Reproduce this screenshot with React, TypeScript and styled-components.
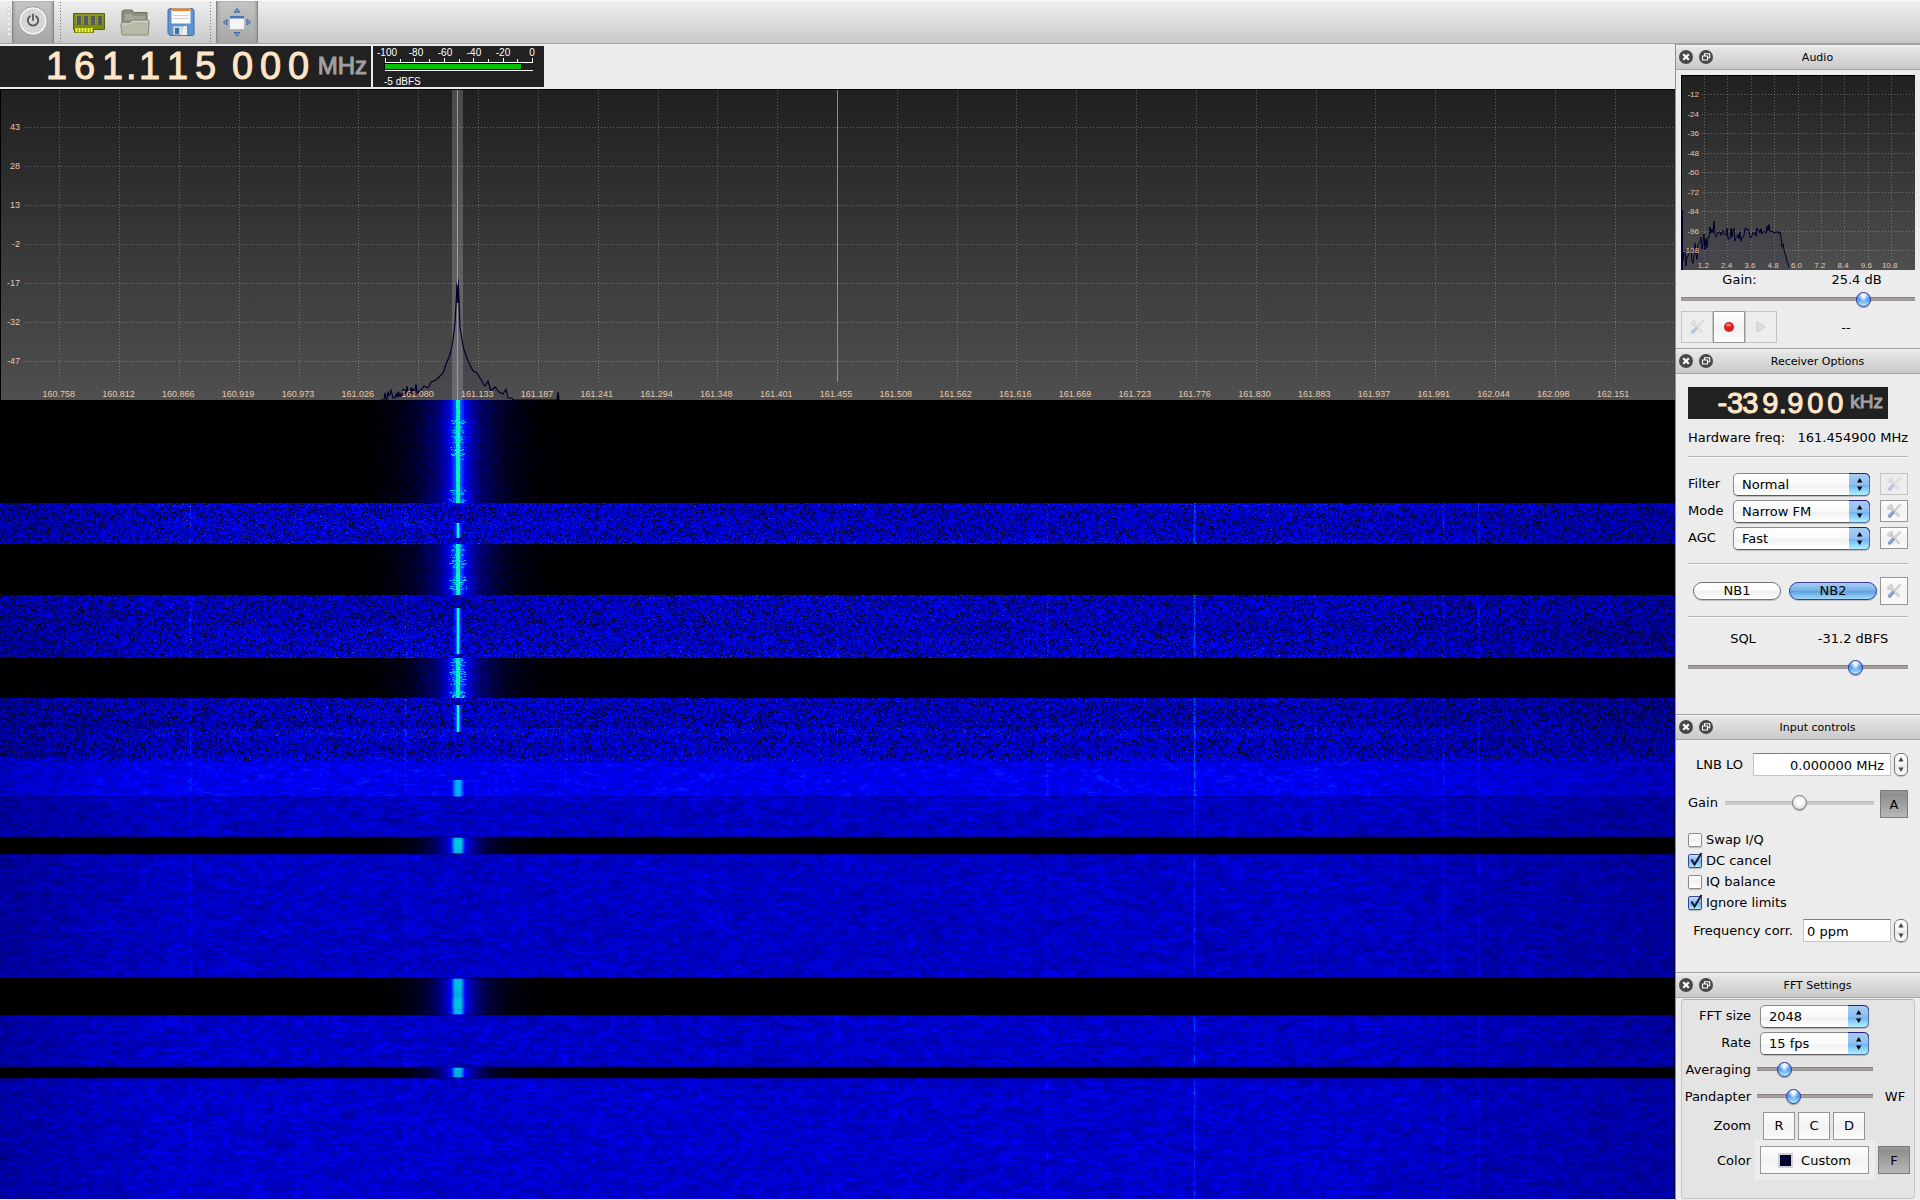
import React, { useId, useLayoutEffect, useRef, useState } from "react";
import styled, { createGlobalStyle, css } from "styled-components";

const UI_FONT = `"Lucida Grande", "DejaVu Sans", sans-serif`;
const PLOT_FONT = `Helvetica, "Liberation Sans", Arial, sans-serif`;

const GlobalStyle = createGlobalStyle`
  *, *::before, *::after { box-sizing: border-box; }
  body { margin: 0; background: #ececec; overflow: hidden; }
  button, input, select { font: inherit; color: inherit; margin: 0; }
`;

/* ---------- shell ---------- */

const Window = styled.div`
  display: flex;
  flex-direction: column;
  height: 100vh;
  font: 13px/19px ${UI_FONT};
  color: #000;
  background: #ececec;
`;

const Toolbar = styled.header`
  display: flex;
  align-items: stretch;
  height: 44px;
  flex: none;
  padding-left: 6px;
  border-top: 1px solid #fafafa;
  border-bottom: 1px solid #a4a4a4;
  background: linear-gradient(#efefef, #c9c9c9);
`;

const Grip = styled.span`
  width: 6px;
  margin: 5px 0;
  background: radial-gradient(circle at 3px 3px, #f8f8f8 1px, #b9b9b9 2px, transparent 2px) 0 0 / 6px 5px;
`;

const ToolButton = styled.button<{ $on?: boolean }>`
  display: grid;
  place-items: center;
  width: ${(p) => (p.$on ? 42 : 46)}px;
  padding: 0;
  border: 0;
  background: ${(p) => (p.$on ? "linear-gradient(#c4c4c4, #a6a6a6)" : "none")};
  box-shadow: ${(p) => (p.$on ? "inset 1px 0 #868686, inset -1px 0 #868686, inset 3px 0 3px -1px #999, inset -3px 0 3px -1px #999" : "none")};
`;

const ToolSeparator = styled.span`
  width: 12px;
  margin: 1px 0;
  background: linear-gradient(#777 1px, transparent 1px) center top / 1px 3px repeat-y;
`;

const Workspace = styled.div`
  display: flex;
  flex: 1;
  min-height: 0;
`;

const Receiver = styled.main`
  display: flex;
  flex-direction: column;
  flex: 1;
  min-width: 0;
`;

const Readouts = styled.div`
  display: flex;
  gap: 2px;
  height: 45px;
  padding: 2px 0;
`;

/* ---------- frequency display ---------- */

const FreqBox = styled.output<{ $large?: boolean }>`
  display: flex;
  align-items: baseline;
  justify-content: flex-end;
  width: ${(p) => (p.$large ? 371 : 200)}px;
  height: ${(p) => (p.$large ? 41 : 32)}px;
  padding-right: ${(p) => (p.$large ? 4 : 5)}px;
  background: #212121;
  color: #ffe6c8;
  font: ${(p) => (p.$large ? "38px/41px" : "29px/32px")} ${PLOT_FONT};
  -webkit-text-stroke: 1px;
`;

const Digit = styled.span<{ $large?: boolean; $sep?: boolean }>`
  display: flex;
  justify-content: center;
  white-space: pre;
  width: ${(p) => (p.$large ? (p.$sep ? 9 : 28) : p.$sep ? 5 : 20)}px;
`;

const Unit = styled.span<{ $large?: boolean }>`
  margin-left: 5px;
  padding-bottom: 2px;
  color: #a0a0a4;
  font-size: ${(p) => (p.$large ? 24 : 19)}px;
  align-self: center;
`;

function Frequency({ cells, unit, large }: { cells: string[]; unit: string; large?: boolean }) {
  return (
    <FreqBox $large={large}>
      {cells.map((c, i) => (
        <Digit key={i} $large={large} $sep={c === "." || c === " "}>
          {c}
        </Digit>
      ))}
      <Unit $large={large}>{unit}</Unit>
    </FreqBox>
  );
}

/* ---------- signal meter ---------- */

const MeterSvg = styled.svg`
  width: 171px;
  height: 41px;
  background: #212121;
  font: 10px ${PLOT_FONT};
  fill: #fff;
`;

function Meter() {
  const ticks = Array.from({ length: 11 }, (_, i) => 12 + Math.round(i * 14.7));
  return (
    <MeterSvg role="img" aria-label="Signal level">
      {["-100", "-80", "-60", "-40", "-20", "0"].map((t, i) => (
        <text key={t} x={14 + i * 29} y={10} textAnchor="middle">
          {t}
        </text>
      ))}
      {ticks.map((x, i) => (
        <rect key={x} x={x} y={i % 2 ? 13 : 12} width={1} height={i % 2 ? 3 : 4} />
      ))}
      <rect x={12} y={16} width={148} height={1} />
      <rect x={11} y={17} width={138} height={7} fill="#000" />
      <rect x={12} y={18} width={136} height={5} fill="#00c000" />
      <rect x={12} y={24} width={148} height={1} />
      <text x={11} y={39}>
        -5 dBFS
      </text>
    </MeterSvg>
  );
}

/* ---------- spectrum ---------- */

const Spectrum = styled.section`
  display: grid;
  grid-template-rows: 1fr auto;
  flex: none;
  height: 311px;
  border: solid #000;
  border-width: 1px 0 0 1px;
  background: linear-gradient(#202020, #4f4f4f);
  font: 9px/11px ${PLOT_FONT};
  color: #e6c8aa;
`;

const PlotSvg = styled.svg`
  grid-area: 1 / 1 / 3 / 2;
  width: 100%;
  height: 100%;
  min-height: 0;
`;

const LevelScale = styled.ol<{ $pitch: number; $top: number; $width: number }>`
  grid-area: 1 / 1 / 3 / 2;
  list-style: none;
  margin: 0;
  padding: ${(p) => p.$top}px 0 0;
  width: ${(p) => p.$width}px;
  text-align: right;
  li { height: ${(p) => p.$pitch}px; }
`;

const FreqScale = styled.ol<{ $inset: string }>`
  grid-area: 2 / 1;
  display: flex;
  list-style: none;
  margin: 0 2px 0 -2px;
  padding: 0 ${(p) => p.$inset};
  li { flex: 1 1 0; display: flex; justify-content: center; min-width: 0; }
`;

const LABELS = (
  "160.758 160.812 160.866 160.919 160.973 161.026 161.080 161.133 161.187 161.241 161.294 161.348 161.401 " +
  "161.455 161.508 161.562 161.616 161.669 161.723 161.776 161.830 161.883 161.937 161.991 162.044 162.098 162.151"
).split(" ");

function rand(x: number, y: number) {
  let h = (Math.imul(x, 374761393) + Math.imul(y, 668265263)) | 0;
  h = Math.imul(h ^ (h >>> 13), 1274126177);
  h = Math.imul(h ^ (h >>> 15), 2246822519);
  return ((h ^ (h >>> 16)) >>> 0) / 4294967296;
}

const LEFT_SKIRT = [
  [421, 390], [424, 386], [428, 388], [431, 382], [436, 380], [440, 376], [443, 373], [446, 364],
  [449, 357], [451, 351], [453, 340], [455, 323], [456, 305], [457, 284], [458, 279],
];
const RIGHT_SKIRT = [
  [459, 300], [460, 327], [462, 340], [464, 350], [467, 358], [470, 365], [473, 371], [477, 373],
  [480, 378], [483, 383], [485, 386], [488, 381], [491, 391], [495, 387], [499, 392], [503, 394],
  [506, 389], [508, 398], [512, 398],
];

function tracePath() {
  const pts: number[][] = [];
  for (let x = 380; x < 421; x += 1) {
    const lift = (x - 380) / 41;
    const spike = rand(x, 3) > 0.5 ? rand(x, 9) * 10 : 0;
    pts.push([x, Math.min(400, 401 - lift * 9 - spike)]);
  }
  pts.push(...LEFT_SKIRT, ...RIGHT_SKIRT);
  for (let x = 513; x < 560; x += 1) {
    const spike = rand(x, 5) > 0.86 ? rand(x, 7) * 7 : 0;
    pts.push([x, 400 - spike]);
  }
  pts.push([557, 400], [558, 392], [559, 400]);
  return "M" + pts.map(([x, y]) => `${x - 1} ${(y - 90).toFixed(1)}`).join("L");
}

const TRACE = tracePath();

function SpectrumPlot() {
  return (
    <Spectrum aria-label="Spectrum">
      <PlotSvg viewBox="0 0 1674 310" preserveAspectRatio="none">
        <g stroke="#fff" strokeOpacity=".28" strokeDasharray="1 2" shapeRendering="crispEdges">
          {LABELS.map((l, i) => {
            const x = Math.floor(((i + 1) * 1675) / 28) - 0.5;
            return <path key={l} d={`M${x} 0V292`} />;
          })}
          {Array.from({ length: 7 }, (_, i) => (
            <path key={i} d={`M24 ${37.5 + i * 39}H1672`} />
          ))}
        </g>
        <rect x="836" width="1" height="292" fill="#8c8ca0" />
        <path d={TRACE + "V310H379Z"} fill="#303050" fillOpacity=".18" />
        <rect x="451" width="11" height="310" fill="#fff" fillOpacity=".19" />
        <path d={TRACE} fill="none" stroke="#00002c" strokeWidth="1.2" />
        <rect x="456" width="1" height="310" fill="#ff7474" shapeRendering="crispEdges" />
        <rect x="456" y="195" width="2" height="18" fill="#00002c" shapeRendering="crispEdges" />
      </PlotSvg>
      <LevelScale $pitch={39} $top={32} $width={19}>
        {["43", "28", "13", "-2", "-17", "-32", "-47"].map((l) => (
          <li key={l}>{l}</li>
        ))}
      </LevelScale>
      <FreqScale $inset="calc(100% / 56)">
        {LABELS.map((l) => (
          <li key={l}>{l}</li>
        ))}
      </FreqScale>
    </Spectrum>
  );
}

/* ---------- waterfall ---------- */

const WaterfallBox = styled.section`
  display: flex;
  flex: 1;
  min-height: 0;
  margin-bottom: 1px;
  background: #000;
  canvas { flex: 1; min-width: 0; height: 100%; width: 100%; }
`;

type Band = { end: number; kind: "carrier" | "speckle" | "streak" | "soft" | "softCarrier"; level?: number; tone?: [number, number] };

const BANDS: Band[] = [
  { end: 103, kind: "carrier" },
  { end: 144, kind: "speckle", level: 0.84, tone: [123, 138] },
  { end: 195, kind: "carrier" },
  { end: 258, kind: "speckle", level: 0.82, tone: [208, 254] },
  { end: 298, kind: "carrier" },
  { end: 332, kind: "speckle", level: 0.79, tone: [305, 332] },
  { end: 361, kind: "streak", level: 0.86 },
  { end: 397, kind: "soft", level: 0.93, tone: [380, 397] },
  { end: 437, kind: "soft", level: 0.76 },
  { end: 454, kind: "softCarrier" },
  { end: 578, kind: "soft", level: 0.76 },
  { end: 615, kind: "softCarrier" },
  { end: 667, kind: "soft", level: 0.78 },
  { end: 678, kind: "softCarrier" },
  { end: 9999, kind: "soft", level: 0.79 },
];

const SPURS: [number, number][] = [
  [1194, 0.42], [1443, 0.2], [1478, 0.2], [1315, 0.12], [1047, 0.16], [1530, 0.12],
  [190, 0.16], [405, 0.16], [837, 0.12], [1100, 0.08], [1395, 0.08], [565, 0.08],
];

function smooth(x: number, y: number, sx: number, sy: number, seed: number) {
  const fx = x / sx;
  const fy = y / sy;
  const ix = Math.floor(fx);
  const iy = Math.floor(fy);
  const tx = fx - ix;
  const ty = fy - iy;
  const a = rand(ix + seed, iy);
  const b = rand(ix + 1 + seed, iy);
  const c = rand(ix + seed, iy + 1);
  const d = rand(ix + 1 + seed, iy + 1);
  return (a + (b - a) * tx) * (1 - ty) + (c + (d - c) * tx) * ty;
}

function paintWaterfall(canvas: HTMLCanvasElement) {
  const w = canvas.clientWidth;
  const h = canvas.clientHeight;
  if (!w || !h) return;
  canvas.width = w;
  canvas.height = h;
  const ctx = canvas.getContext("2d");
  if (!ctx) return;
  const img = ctx.createImageData(w, h);
  const scale = w / 1675;
  // the carrier falls between two bins, so both neighbours carry its peak
  const carrier = Math.floor(457 * scale) + 0.5;
  const spur = new Float32Array(w);
  SPURS.forEach(([x, amount]) => {
    const c = Math.round(x * scale);
    spur[c] += amount;
    if (c + 1 < w) spur[c + 1] += amount / 2;
    if (c > 0) spur[c - 1] += amount / 3;
  });
  let bi = 0;
  for (let y = 0; y < h; y++) {
    while (y >= BANDS[bi].end) bi++;
    const band = BANDS[bi];
    const start = bi ? BANDS[bi - 1].end : 0;
    const fromEdge = Math.min(y - start, band.end - 1 - y);
    const burst = band.kind === "carrier" && smooth(y, 1, 9, 1, 77) > 0.42 && rand(y, 21) > 0.35;
    const reach = burst ? 3 + rand(y, 31) * 6 : 0;
    const rowGain = (rand(y, 55) - 0.5) * 0.05;
    for (let x = 0; x < w; x++) {
      const d = Math.abs(x - carrier);
      const r = rand(x, y);
      const edge = Math.min(1, 0.8 + (x / w) * 2) * Math.min(1, 0.78 + ((w - x) / w) * 1.1);
      let v = 0;
      if (band.kind === "carrier") {
        v = 1.05 * Math.exp(-Math.max(0, d - 6) / 18) * (0.86 + r * 0.2);
        if (burst && d < 40) v *= 1.1;
        if (d > 26 && d < 130) v += Math.max(0, r * 0.26 * (1 - d / 130) - 0.05);
        else if (d >= 130 && r > 0.994) v += 0.1;
        if (d < 6) v = 1.05 + (6 - d) * 0.07 + r * 0.1;
        if (d < reach && rand(x >> 1, y + 999) > 0.35) v = 1.35 + r * 0.5;
        if (d < 2) v = 1.75 + r * 0.3;
        if (d < 1) v = 2.42;
      } else if (band.kind === "softCarrier") {
        v = 1.05 * Math.exp(-Math.max(0, d - 6) / 17) * (0.93 + smooth(x, y, 5, 3, 2) * 0.1);
        if (d < 8) v = Math.max(v, 1.7 - Math.max(0, d - 3) * 0.18 + (smooth(1, y, 1, 5, 8) - 0.5) * 0.2);
        if (d > 80) v *= 0.4;
        v *= fromEdge < 1 ? 0.7 : 1;
      } else if (band.kind === "soft") {
        const n = smooth(x, y, 4, 2, 11) * 0.6 + smooth(x, y, 9, 4, 301) * 0.4;
        v = (band.level! + (n - 0.5) * 0.42 + rowGain) * edge + spur[x] * (0.5 + n * 0.5);
        if (band.tone && y >= band.tone[0] && y < band.tone[1] && d < 7) v = 1.68 - Math.max(0, d - 2) * 0.16;
        if (fromEdge < 1) v *= 0.8;
        if (w - x < 3) v *= 0.4;
      } else {
        const r2 = band.kind === "streak" ? rand(x, (y / 3) | 0) * 0.65 + r * 0.35 : r;
        const dim = smooth(x, y, 400, 12, 50) * 0.12;
        v = band.level! - dim + (r2 - 0.5) * 0.6 + rowGain;
        if (rand(x + 77, y) < 0.14) v *= 0.25;
        else if (rand((x >> 1) + 33, y) > 0.965) v += 0.16;
        if (fromEdge < 4) v += 0.08;
        v = Math.min(v * edge + spur[x] * 1.2, 1.35);
        if (spur[x] > 0.4) v = Math.max(v, 1.05);
        if (band.tone && y >= band.tone[0] && y < band.tone[1]) {
          if (d < 4) v = 0.95 + r * 0.3;
          if (d < 2) v = 1.4;
          if (d < 1) v = 2.1;
        }
      }
      const o = (y * w + x) * 4;
      v = Math.max(0, v);
      img.data[o] = 0;
      img.data[o + 1] = v <= 1 ? 0 : Math.min(255, (v - 1) * 255);
      img.data[o + 2] = v <= 1 ? v * 255 : v <= 2 ? 255 - (band.kind === "softCarrier" ? (v - 1) * 40 : 0) : Math.max(0, (3 - v) * 255);
      img.data[o + 3] = 255;
    }
  }
  ctx.putImageData(img, 0, 0);
}

function Waterfall() {
  const ref = useRef<HTMLCanvasElement>(null);
  useLayoutEffect(() => {
    const paint = () => ref.current && paintWaterfall(ref.current);
    paint();
    window.addEventListener("resize", paint);
    return () => window.removeEventListener("resize", paint);
  }, []);
  return (
    <WaterfallBox aria-label="Waterfall">
      <canvas ref={ref} />
    </WaterfallBox>
  );
}

/* ---------- dock ---------- */

const Dock = styled.aside`
  display: flex;
  flex-direction: column;
  flex: none;
  width: 245px;
  border-left: 1px solid #8e8e8e;
  background: #ececec;
`;

const Panel = styled.section<{ $height?: number }>`
  display: flex;
  flex-direction: column;
  ${(p) => (p.$height ? `min-height: ${p.$height}px;` : "flex: 1;")}
`;

const PanelHeader = styled.header`
  display: flex;
  align-items: center;
  gap: 6px;
  height: 26px;
  padding: 0 4px 0 3px;
  border-top: 1px solid #a0a0a0;
  border-bottom: 1px solid #a8a8a8;
  background: linear-gradient(#f6f6f6, #e6e6e6 10%, #c9c9c9);
  button { display: block; width: 14px; height: 14px; padding: 0; border: 0; background: none; }
  svg { display: block; }
`;

const PanelTitle = styled.h2`
  flex: 1;
  margin: 0;
  padding-top: 1px;
  text-align: center;
  font-size: 11px;
  line-height: 23px;
  font-weight: 400;
`;

function DockPanel({ title, height, children }: { title: string; height?: number; children: React.ReactNode }) {
  return (
    <Panel $height={height}>
      <PanelHeader>
        <button aria-label={`Close ${title}`}>
          <svg width="14" height="14" viewBox="0 0 14 14">
            <circle cx="7" cy="7" r="7" fill="#474747" />
            <path d="M4.2 4.2l5.6 5.6M9.8 4.2L4.2 9.8" stroke="#fff" strokeWidth="2.2" />
          </svg>
        </button>
        <button aria-label={`Float ${title}`}>
          <svg width="14" height="14" viewBox="0 0 14 14">
            <circle cx="7" cy="7" r="7" fill="#474747" />
            <path d="M5.5 5.5V3.7h5.2v4H9M3.5 6h5v4h-5z" fill="none" stroke="#fff" strokeWidth="1.1" />
          </svg>
        </button>
        <PanelTitle>{title}</PanelTitle>
      </PanelHeader>
      {children}
    </Panel>
  );
}

const AudioBody = styled.div`
  padding: 5px 5px 0;
`;

const AudioPlot = styled.div`
  display: grid;
  grid-template-rows: 1fr auto;
  height: 195px;
  border-top: 1px solid #000;
  border-left: 1px solid #000;
  background: linear-gradient(#202020, #4f4f4f);
  font: 8px/8px ${PLOT_FONT};
  color: #e6c8aa;
`;

const Pair = styled.div`
  display: grid;
  grid-template-columns: 1fr 1fr;
  text-align: center;
`;

const Spread = styled.div`
  display: flex;
  justify-content: space-between;
  white-space: nowrap;
`;

const Slider = styled.input.attrs({ type: "range" })<{ $dim?: boolean; $h?: number; $top?: number }>`
  appearance: none;
  display: block;
  width: 100%;
  min-width: 0;
  height: ${(p) => p.$h ?? 16}px;
  margin-top: ${(p) => p.$top ?? 0}px;
  background: linear-gradient(${(p) => (p.$dim ? "#b4b4b4, #d0d0d0 50%, #c8c8c8" : "#7d7472, #b0aaaa 50%, #8f8a8a")}) center / 100% 4px no-repeat;
  border-radius: 2px;
  &::-webkit-slider-thumb {
    appearance: none;
    width: 15px;
    height: 15px;
    border-radius: 50%;
    border: 1px solid ${(p) => (p.$dim ? "#7c7c7c" : "#2b2f9c")};
    background: ${(p) =>
      p.$dim
        ? "radial-gradient(circle at 50% 45%, #fff 25%, #dcdcdc 75%)"
        : "radial-gradient(ellipse at 50% 12%, #f4faff 15%, transparent 50%), linear-gradient(#8fbdf0, #4f9cec 50%, #b4f2ff)"};
    box-shadow: 0 1px 1px #0005;
  }
`;

const AudioButtons = styled.div`
  display: flex;
  align-items: center;
  margin-top: 4px;
`;

const SquareButton = styled.button<{ $w?: number; $h?: number; $disabled?: boolean; $down?: boolean }>`
  display: flex;
  align-items: center;
  justify-content: center;
  gap: 8px;
  flex: none;
  width: ${(p) => p.$w ?? 28}px;
  height: ${(p) => p.$h ?? 28}px;
  padding: 0;
  border: 1px solid #969696;
  background: linear-gradient(#fefefe, #f2f2f2 50%, #fafafa);
  ${(p) => p.$disabled && css`
    border-color: #c4c4c4;
    background: #ededed;
    svg { opacity: 0.5; }
  `}
  ${(p) => p.$down && css`
    border-color: #7c7c7c;
    background: linear-gradient(#979797 2px, #8e8e8e 3px, #b8b8b8);
  `}
`;

const RecordTime = styled.output`
  flex: 1;
  text-align: center;
`;

const ToolsIcon = () => (
  <svg width="16" height="16" viewBox="0 0 16 16" fill="none" strokeLinecap="round">
    <path d="M3.5 3.5l9 9.2" stroke="#b4b4b4" strokeWidth="2.4" />
    <path d="M3.5 3.5l9 9.2" stroke="#e2e2e2" strokeWidth="1.2" />
    <path d="M1.6 4.2a2.4 2.4 0 1 0 2.8-2.8" stroke="#c8c8c8" strokeWidth="1.5" />
    <path d="M14 2L8 8.3" stroke="#bcbcbc" strokeWidth="2" />
    <path d="M14 2L8 8.3" stroke="#e8e8e8" strokeWidth="1" />
    <path d="M6.6 9.8l-3 3.2" stroke="#6d92c6" strokeWidth="3.4" />
    <path d="M6.2 9.6l-3 3" stroke="#9dbbe0" strokeWidth="1.2" />
  </svg>
);

function audioTrace() {
  const env = [
    [0, 186], [6, 182], [14, 176], [22, 168], [27, 160], [32, 155], [40, 157], [52, 158],
    [56, 162], [62, 157], [78, 156], [84, 152], [88, 150], [94, 156], [98, 161], [101, 172], [104, 186], [107, 194],
  ];
  const out: string[] = [];
  for (let x = 0; x <= 107; x++) {
    const i = Math.max(0, env.findIndex(([ex]) => ex >= x) - 1);
    const [x0, y0] = env[i];
    const [x1, y1] = env[i + 1];
    const base = y0 + ((y1 - y0) * (x - x0)) / (x1 - x0);
    const noise = (rand(x, 41) - 0.5) * (x < 30 ? 20 : 12);
    out.push(`${x} ${(x === 32 ? 145 : base + noise).toFixed(1)}`);
  }
  return "M" + out.join("L");
}
const AUDIO_TRACE = audioTrace();

function AudioPanel() {
  const [gain, setGain] = useState(80);
  const id = useId();
  return (
    <DockPanel title="Audio" height={304}>
      <AudioBody>
        <AudioPlot>
          <PlotSvg viewBox="0 0 233 194" preserveAspectRatio="none">
            <g stroke="#fff" strokeOpacity=".28" strokeDasharray="1 2" shapeRendering="crispEdges">
              {Array.from({ length: 9 }, (_, i) => (
                <React.Fragment key={i}>
                  <path d={`M${Math.floor((i + 1) * 23.4) - 0.5} 0V184`} />
                  <path d={`M20 ${Math.floor((i + 1) * 19.5) - 0.5}H233`} />
                </React.Fragment>
              ))}
            </g>
            <path d={AUDIO_TRACE + "V194H0Z"} fill="#303050" fillOpacity=".22" />
            <path d={AUDIO_TRACE} fill="none" stroke="#00002c" />
            <rect y="134" width="1" height="60" fill="#00002c" />
          </PlotSvg>
          <LevelScale $pitch={19.5} $top={15} $width={17}>
            {["-12", "-24", "-36", "-48", "-60", "-72", "-84", "-96", "-108"].map((l) => (
              <li key={l}>{l}</li>
            ))}
          </LevelScale>
          <FreqScale $inset="5%">
            {["1.2", "2.4", "3.6", "4.8", "6.0", "7.2", "8.4", "9.6", "10.8"].map((l) => (
              <li key={l}>{l}</li>
            ))}
          </FreqScale>
        </AudioPlot>
        <Pair>
          <label htmlFor={id}>Gain:</label>
          <output>25.4 dB</output>
        </Pair>
        <Slider id={id} $top={2} value={gain} onChange={(e) => setGain(+e.target.value)} />
        <AudioButtons>
          <SquareButton $w={32} $h={32} $disabled aria-label="Audio options">
            <ToolsIcon />
          </SquareButton>
          <SquareButton $w={32} $h={32} aria-label="Record">
            <svg width="12" height="12" viewBox="0 0 12 12">
              <circle cx="6" cy="6" r="5" fill="#dc1f1f" />
              <ellipse cx="5.5" cy="4" rx="2.6" ry="1.6" fill="#f67b7b" />
            </svg>
          </SquareButton>
          <SquareButton $w={32} $h={32} $disabled aria-label="Play">
            <svg width="12" height="12" viewBox="0 0 12 12">
              <path d="M2 1l8 5-8 5z" fill="#d4d4d4" stroke="#a8a8a8" />
            </svg>
          </SquareButton>
          <RecordTime>--</RecordTime>
        </AudioButtons>
      </AudioBody>
    </DockPanel>
  );
}

/* ---------- receiver options ---------- */

const ReceiverBody = styled.div`
  display: flex;
  flex-direction: column;
  padding: 13px 12px 0;
`;

const HardwareRow = styled(Spread)`
  margin-top: 9px;
`;

const Rule = styled.hr<{ $top: number; $bottom: number }>`
  width: 100%;
  height: 2px;
  margin: ${(p) => p.$top}px 0 ${(p) => p.$bottom}px;
  border: 0;
  border-top: 1px solid #b4b4b4;
  border-bottom: 1px solid #fbfbfb;
`;

const OptionRow = styled.div`
  display: grid;
  grid-template-columns: 45px 137px 1fr;
  height: 27px;
  > label { line-height: 22px; }
  > :last-child { justify-self: end; }
`;

const SelectBox = styled.span`
  display: grid;
  height: 23px;
  svg { grid-area: 1 / 1; justify-self: end; pointer-events: none; }
`;

const NativeSelect = styled.select`
  grid-area: 1 / 1;
  appearance: none;
  height: 23px;
  padding: 0 24px 1px 8px;
  border: 1px solid #8a8a8a;
  border-bottom-color: #5c5c5c;
  border-radius: 5px;
  background: linear-gradient(#fff, #fafafa 50%, #efefef 51%, #fff);
  box-shadow: 0 1px 1px #0003;
`;

function Select({ id, value }: { id: string; value: string }) {
  const g = useId();
  return (
    <SelectBox>
      <NativeSelect id={id} defaultValue={value}>
        <option>{value}</option>
      </NativeSelect>
      <svg width="21" height="23" viewBox="0 0 21 23">
        <defs>
          <linearGradient id={g} x2="0" y2="1">
            <stop offset="0" stopColor="#a9ccf2" />
            <stop offset=".5" stopColor="#8fbef2" />
            <stop offset=".52" stopColor="#6cb1f4" />
            <stop offset="1" stopColor="#b2f3ff" />
          </linearGradient>
        </defs>
        <path d="M0 .5h16a4.5 4.5 0 0 1 4.500 4.500v13a4.500 4.500 0 0 1-4.500 4.500H0z" fill={`url(#${g})`} />
        <path d="M0 .5h16a4.500 4.500 0 0 1 4.500 4.500" fill="none" stroke="#221e86" />
        <path d="M20.500 5v13a4.500 4.500 0 0 1-4.500 4.500H0" fill="none" stroke="#53729a" />
        <path d="M8 9.500l2.700-4.500 2.700 4.500zM8 13.500l2.700 4.500 2.700-4.500z" fill="#000" />
      </svg>
    </SelectBox>
  );
}

const NoiseRow = styled.div`
  display: flex;
  align-items: center;
  gap: 8px;
  height: 28px;
  padding-left: 5px;
  > :last-child { margin-left: -5px; }
`;

const Pill = styled.button<{ $on?: boolean }>`
  flex: 1;
  height: 18px;
  padding: 0;
  line-height: 16px;
  border-radius: 9px;
  border: 1px solid ${(p) => (p.$on ? "#3b3a94" : "#757575")};
  background: ${(p) =>
    p.$on
      ? "linear-gradient(#a8cdf3, #72aee8 50%, #5b9fe3 52%, #a2dbfb)"
      : "linear-gradient(#fff, #fbfbfb 50%, #efefef 52%, #fff)"};
  box-shadow: 0 1px 1px #0003;
`;

function ReceiverPanel() {
  const id = useId();
  const [sql, setSql] = useState(78);
  return (
    <DockPanel title="Receiver Options" height={366}>
      <ReceiverBody>
        <Frequency cells={["-3", "3", "9", ".", "9", "0", "0"]} unit="kHz" />
        <HardwareRow>
          <span>Hardware freq:</span>
          <output>161.454900 MHz</output>
        </HardwareRow>
        <Rule $top={9} $bottom={15} />
        {[
          ["Filter", "Normal"],
          ["Mode", "Narrow FM"],
          ["AGC", "Fast"],
        ].map(([label, value], i) => (
          <OptionRow key={label}>
            <label htmlFor={id + label}>{label}</label>
            <Select id={id + label} value={value} />
            <SquareButton $h={22} $disabled={i === 0} aria-label={`${label} options`}>
              <ToolsIcon />
            </SquareButton>
          </OptionRow>
        ))}
        <Rule $top={9} $bottom={12} />
        <NoiseRow>
          <Pill>NB1</Pill>
          <Pill $on>NB2</Pill>
          <SquareButton aria-label="Noise blanker options">
            <ToolsIcon />
          </SquareButton>
        </NoiseRow>
        <Rule $top={11} $bottom={11} />
        <Pair>
          <label htmlFor={id + "sql"}>SQL</label>
          <output>-31.2 dBFS</output>
        </Pair>
        <Slider id={id + "sql"} $top={11} value={sql} onChange={(e) => setSql(+e.target.value)} />
      </ReceiverBody>
    </DockPanel>
  );
}

/* ---------- input controls ---------- */

const InputBody = styled.div`
  display: flex;
  flex-direction: column;
  padding: 13px 12px 0;
`;

const FieldRow = styled.div<{ $top?: number }>`
  display: flex;
  align-items: center;
  justify-content: flex-end;
  gap: 3px;
  height: 23px;
  margin-top: ${(p) => p.$top ?? 0}px;
  label { margin-right: 7px; white-space: nowrap; }
`;

const Field = styled.input<{ $w: number; $right?: boolean }>`
  width: ${(p) => p.$w}px;
  height: 23px;
  padding: 2px ${(p) => (p.$right ? 6 : 3)}px 0;
  text-align: ${(p) => (p.$right ? "right" : "left")};
  border: 1px solid #c4c4c4;
  border-top-color: #808080;
  background: #fff;
`;

const Stepper = styled.span`
  display: flex;
  flex-direction: column;
  width: 14px;
  height: 23px;
  border: 1px solid #777;
  border-radius: 6px;
  background: linear-gradient(#fff, #f4f4f4 50%, #e6e6e6 52%, #fff);
  box-shadow: 0 1px 1px #0003;
  button { flex: 1; display: grid; place-items: center; padding: 0; border: 0; background: none; }
  svg { display: block; }
`;

function Spin({ label }: { label: string }) {
  return (
    <Stepper>
      <button aria-label={`Increase ${label}`}>
        <svg width="6" height="5" viewBox="0 0 6 5"><path d="M0.500 4.500L3 0l2.500 4.500z" fill="#444" /></svg>
      </button>
      <button aria-label={`Decrease ${label}`}>
        <svg width="6" height="5" viewBox="0 0 6 5"><path d="M0.500 .5L3 5 5.500.5z" fill="#444" /></svg>
      </button>
    </Stepper>
  );
}

const GainRow = styled.div`
  display: grid;
  grid-template-columns: 31px 1fr 28px;
  align-items: start;
  column-gap: 6px;
  margin: 14px 0 11px;
  > label { line-height: 25px; }
`;

const CheckLabel = styled.label`
  display: flex;
  align-items: center;
  gap: 4px;
  height: 21px;
`;

const CheckBox = styled.span<{ $on: boolean }>`
  display: grid;
  width: 14px;
  height: 14px;
  input {
    grid-area: 1 / 1;
    appearance: none;
    width: 14px;
    height: 14px;
    border: 1px solid ${(p) => (p.$on ? "#3a4a98" : "#8c8c8c")};
    border-radius: 2px;
    background: ${(p) => (p.$on ? "linear-gradient(#c9e0f8, #74b4f0 55%, #b4eaff)" : "linear-gradient(#fff, #f0f0f0 50%, #fff)")};
    box-shadow: 0 1px 1px #0003;
  }
  svg { grid-area: 1 / 1; overflow: visible; pointer-events: none; }
`;

function Check({ label, initial }: { label: string; initial: boolean }) {
  const [on, setOn] = useState(initial);
  return (
    <CheckLabel>
      <CheckBox $on={on}>
        <input type="checkbox" checked={on} onChange={(e) => setOn(e.target.checked)} />
        {on && (
          <svg width="14" height="14" viewBox="0 0 14 14">
            <path d="M3.500 5.500L6.500 10.500 13.500-1" fill="none" stroke="#16182c" strokeWidth="2" />
          </svg>
        )}
      </CheckBox>
      {label}
    </CheckLabel>
  );
}

function InputPanel() {
  const id = useId();
  const [gain, setGain] = useState(50);
  return (
    <DockPanel title="Input controls" height={258}>
      <InputBody>
        <FieldRow>
          <label htmlFor={id + "lo"}>LNB LO</label>
          <Field id={id + "lo"} $w={138} $right defaultValue="0.000000 MHz" />
          <Spin label="LNB LO" />
        </FieldRow>
        <GainRow>
          <label htmlFor={id + "gain"}>Gain</label>
          <Slider id={id + "gain"} $dim $h={25} value={gain} onChange={(e) => setGain(+e.target.value)} />
          <SquareButton $down>A</SquareButton>
        </GainRow>
        <Check label="Swap I/Q" initial={false} />
        <Check label="DC cancel" initial />
        <Check label="IQ balance" initial={false} />
        <Check label="Ignore limits" initial />
        <FieldRow $top={6}>
          <label htmlFor={id + "ppm"}>Frequency corr.</label>
          <Field id={id + "ppm"} $w={88} defaultValue="0 ppm" />
          <Spin label="Frequency correction" />
        </FieldRow>
      </InputBody>
    </DockPanel>
  );
}

/* ---------- FFT settings ---------- */

const FftBody = styled.div`
  flex: 1;
  display: flex;
  flex-direction: column;
  margin: 1px 5px 1px;
  padding: 5px 3px 0 3px;
  border: 1px solid #c6c6c6;
  border-top-color: #b0b0b0;
  border-radius: 4px;
  background: #e4e4e4;
`;

const FftRow = styled.div<{ $h?: number; $middle?: boolean }>`
  display: grid;
  grid-template-columns: 66px 109px 1fr;
  column-gap: 9px;
  height: ${(p) => p.$h ?? 27}px;
  align-items: ${(p) => (p.$middle ? "center" : "start")};
  > label, > span:first-child { justify-self: end; white-space: nowrap; line-height: 21px; }
`;

const SliderRow = styled(FftRow)`
  grid-template-columns: 66px 116px 1fr;
  column-gap: 6px;
`;

const WaterfallTag = styled.span`
  text-align: center;
  line-height: 21px;
`;

const ZoomButtons = styled.div`
  display: flex;
  gap: 3px;
  padding-left: 3px;
`;

const ColorRow = styled(FftRow)`
  grid-template-columns: 66px 121px 1fr;
  column-gap: 3px;
`;

const ColorWell = styled.div`
  height: 40px;
  padding: 6px;
  background: #ececec;
`;

const Swatch = styled.span`
  width: 15px;
  height: 15px;
  border: 2px solid #cfcfcf;
  background: #00002c;
`;

function FftPanel() {
  const id = useId();
  const [avg, setAvg] = useState(20);
  const [split, setSplit] = useState(29);
  return (
    <DockPanel title="FFT Settings">
      <FftBody>
        <FftRow>
          <label htmlFor={id + "s"}>FFT size</label>
          <Select id={id + "s"} value="2048" />
        </FftRow>
        <FftRow>
          <label htmlFor={id + "r"}>Rate</label>
          <Select id={id + "r"} value="15 fps" />
        </FftRow>
        <SliderRow>
          <label htmlFor={id + "a"}>Averaging</label>
          <Slider id={id + "a"} $h={20} value={avg} onChange={(e) => setAvg(+e.target.value)} />
        </SliderRow>
        <SliderRow $h={25}>
          <label htmlFor={id + "p"}>Pandapter</label>
          <Slider id={id + "p"} $h={20} value={split} onChange={(e) => setSplit(+e.target.value)} />
          <WaterfallTag>WF</WaterfallTag>
        </SliderRow>
        <FftRow $h={29} $middle>
          <span>Zoom</span>
          <ZoomButtons>
            <SquareButton $w={32}>R</SquareButton>
            <SquareButton $w={32}>C</SquareButton>
            <SquareButton $w={32}>D</SquareButton>
          </ZoomButtons>
        </FftRow>
        <ColorRow $h={40} $middle>
          <span>Color</span>
          <ColorWell>
            <SquareButton $w={109}>
              <Swatch />
              Custom
            </SquareButton>
          </ColorWell>
          <SquareButton $w={32} $down>F</SquareButton>
        </ColorRow>
      </FftBody>
    </DockPanel>
  );
}

/* ---------- toolbar icons ---------- */

const PowerIcon = () => (
  <svg width="30" height="32" viewBox="0 0 30 32">
    <circle cx="15" cy="15" r="14.300" fill="#f2f2f2" stroke="#8f8f8f" strokeWidth=".8" />
    <circle cx="15" cy="15" r="12" fill="#d6d6d4" />
    <path d="M12 10.200a5.200 5.200 0 1 0 6 0" fill="none" stroke="#565656" strokeWidth="1.800" strokeLinecap="round" />
    <path d="M15 8.500v5.500" stroke="#565656" strokeWidth="1.800" strokeLinecap="round" />
  </svg>
);

const CardIcon = () => (
  <svg width="32" height="24" viewBox="0 0 32 24">
    <path d="M.5 3.500h31v16H20.500v3H1.500v-3h-1z" fill="#7f8a10" stroke="#59620a" />
    <path d="M2 5h28" stroke="#9ba52c" />
    {[4, 11, 18, 25].map((x) => (
      <g key={x}>
        <rect x={x} y="6" width="4" height="9" rx="1" fill="#55595a" />
        <path d={`M${x - 1} 8h1M${x - 1} 10.500h1M${x - 1} 13h1M${x + 4} 8h1M${x + 4} 10.500h1M${x + 4} 13h1`} stroke="#a9ae8c" />
      </g>
    ))}
    {[3, 6, 9, 12, 15, 18].map((x) => (
      <rect key={x} x={x - 0.5} y="18" width="2" height="4.500" fill="#f3f53c" />
    ))}
  </svg>
);

const FolderIcon = () => (
  <svg width="30" height="28" viewBox="0 0 30 28">
    <path d="M2 14V3.500L3.500 2h8.500l1.500 2.500h13.500v10H2z" fill="#8d9080" stroke="#6c6f60" />
    <path d="M5 12h20V8H13l-2-2H5z" fill="#a3a695" />
    <path d="M.8 16l1.400-1.500h7.300l2.500-2.500h16l1.200 1.200-1 13-1 .8H2.800l-1-.8z" fill="#b9bba8" stroke="#84877a" />
    <path d="M2 16h8l2.500-2.500h15.500" fill="none" stroke="#d6d8c9" />
  </svg>
);

const FloppyIcon = () => (
  <svg width="28" height="30" viewBox="0 0 28 30">
    <path d="M1 3l1.500-1.500h23L27 3v24.500l-1 1H3l-2-2z" fill="#5d93d2" stroke="#3d6da8" />
    <path d="M4.500 1.500h19v15h-19z" fill="#fbfbfb" />
    <path d="M4.500 1.500h19v2.500h-19z" fill="#f08020" />
    <path d="M6 8.500h16M6 11.500h16" stroke="#d2d2d2" />
    <path d="M6 19h14v9H6z" fill="#d4d8da" stroke="#7d97b5" strokeWidth=".8" />
    <path d="M8 21h4v6H8z" fill="#3a6ea8" />
    <path d="M17 19h3v9h-6z" fill="#eceeee" />
  </svg>
);

const FitIcon = () => (
  <svg width="30" height="30" viewBox="0 0 30 30">
    <rect x="7.500" y="8.500" width="15" height="14" rx="1" fill="#f5f5f5" stroke="#b5b5b5" />
    <path d="M8 9h14v2.500H8z" fill="#4a76b4" />
    <path d="M12.200 5.200L15 1.500l2.800 3.700zM12.200 25.500l2.800 3.700 2.800-3.700zM5 12.500l-3.700 2.800L5 18zM25 12.500l3.700 2.800L25 18z" fill="#7ea4d6" stroke="#2f5c9e" strokeWidth=".9" />
  </svg>
);

export default function App() {
  return (
    <Window>
      <GlobalStyle />
      <Toolbar>
        <Grip />
        <ToolButton $on aria-label="Start DSP"><PowerIcon /></ToolButton>
        <ToolSeparator />
        <ToolButton aria-label="Configure I/O devices"><CardIcon /></ToolButton>
        <ToolButton aria-label="Load settings"><FolderIcon /></ToolButton>
        <ToolButton aria-label="Save settings"><FloppyIcon /></ToolButton>
        <ToolSeparator />
        <ToolButton $on aria-label="Full screen"><FitIcon /></ToolButton>
      </Toolbar>
      <Workspace>
        <Receiver>
          <Readouts>
            <Frequency large unit="MHz" cells={["1", "6", "1", ".", "1", "1", "5", " ", "0", "0", "0"]} />
            <Meter />
          </Readouts>
          <SpectrumPlot />
          <Waterfall />
        </Receiver>
        <Dock>
          <AudioPanel />
          <ReceiverPanel />
          <InputPanel />
          <FftPanel />
        </Dock>
      </Workspace>
    </Window>
  );
}
